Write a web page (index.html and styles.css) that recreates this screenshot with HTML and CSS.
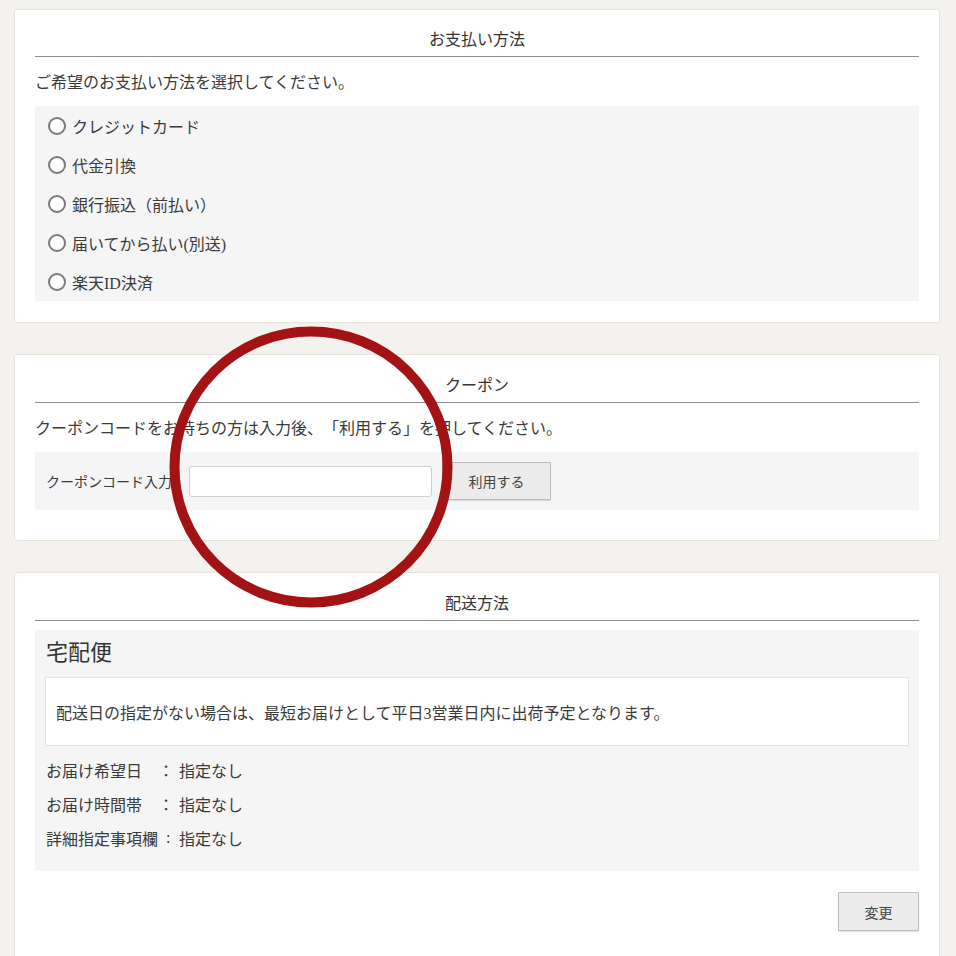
FILE: index.html
```html
<!doctype html>
<html lang="ja">
<head>
  <meta charset="utf-8">
  <title>お支払い方法</title>
  <link rel="stylesheet" href="styles.css">
</head>

<body class="page">
  <div class="cards">

    <section class="card card-payment">
      <h2 class="card-title">お支払い方法</h2>
      <p class="card-lead">ご希望のお支払い方法を選択してください。</p>
      <div class="box">
        <label class="radio-row"><input class="radio" type="radio" name="pay">クレジットカード</label>
        <label class="radio-row"><input class="radio" type="radio" name="pay">代金引換</label>
        <label class="radio-row"><input class="radio" type="radio" name="pay">銀行振込（前払い）</label>
        <label class="radio-row"><input class="radio" type="radio" name="pay">届いてから払い(別送)</label>
        <label class="radio-row"><input class="radio" type="radio" name="pay">楽天ID決済</label>
      </div>
    </section>

    <section class="card card-coupon">
      <h2 class="card-title">クーポン</h2>
      <p class="card-lead">クーポンコードをお持ちの方は入力後、「利用する」を押してください。</p>
      <div class="box coupon-box">
        <span class="coupon-label">クーポンコード入力</span>
        <input class="coupon-input" type="text" value="">
        <button class="btn btn-use" type="button">利用する</button>
      </div>
    </section>

    <section class="card card-delivery">
      <h2 class="card-title">配送方法</h2>
      <div class="box delivery-box">
        <h3 class="delivery-name">宅配便</h3>
        <div class="notice">配送日の指定がない場合は、最短お届けとして平日3営業日内に出荷予定となります。</div>
        <div class="delivery-row"><span class="delivery-key">お届け希望日</span><span class="delivery-sep">：</span>指定なし</div>
        <div class="delivery-row"><span class="delivery-key">お届け時間帯</span><span class="delivery-sep">：</span>指定なし</div>
        <div class="delivery-row"><span class="delivery-key wide">詳細指定事項欄</span><span class="delivery-sep tight">:</span>指定なし</div>
      </div>
      <div class="actions">
        <button class="btn btn-change" type="button">変更</button>
      </div>
    </section>

  </div>

  <!-- red marker drawn over the coupon field -->
  <svg class="marker" width="284" height="282" viewBox="0 0 284 282">
    <ellipse cx="142" cy="141" rx="136.5" ry="135.5" fill="none" stroke="#a31313" stroke-width="10"/>
  </svg>
</body>
</html>
```

FILE: styles.css
```css
.page {
  margin: 0;
  padding: 0;
  background: #f4f2ee;
  color: #3a3a3a;
  font-family: 'Liberation Serif', 'Noto Sans CJK JP', serif;
  font-size: 16px;
  text-spacing-trim: space-all;
  position: relative;
  height: 956px;
  overflow: hidden;
}

.cards {
  display: flex;
  flex-direction: column;
  gap: 31px;
  padding: 9px 16px 0 14px;
}

.card {
  background: #ffffff;
  border: 1px solid #e6e3dd;
  border-radius: 3px;
  padding: 0 20px 21px 20px;
}

.card-coupon {
  padding-bottom: 30px;
}

.card-delivery {
  padding-bottom: 60px;
}

.card-title {
  margin: 0;
  padding: 18px 0 4px 0;
  border-bottom: 1px solid #8f8f8f;
  text-align: center;
  font-size: 16px;
  font-weight: normal;
  line-height: 24px;
  color: #333333;
}

.card-coupon .card-title,
.card-delivery .card-title {
  padding-top: 19px;
}

.card-lead {
  margin: 0;
  padding: 14px 0 0 0;
  height: 35px;
  line-height: 24px;
  color: #3a3a3a;
}

.box {
  background: #f5f5f5;
}

.radio-row {
  display: flex;
  align-items: center;
  height: 39px;
  padding-left: 13px;
  color: #3a3a3a;
}

.radio {
  appearance: none;
  -webkit-appearance: none;
  width: 18px;
  height: 18px;
  margin: 0 6px 0 0;
  border: 2px solid #7a7a7a;
  border-radius: 50%;
  background: #ffffff;
  box-sizing: border-box;
}

.coupon-box {
  display: flex;
  align-items: center;
  height: 58px;
  padding-left: 11px;
}

.coupon-label {
  font-size: 14px;
  width: 143px;
  color: #3a3a3a;
}

.coupon-input {
  width: 243px;
  height: 31px;
  box-sizing: border-box;
  margin: 0;
  border: 1px solid #cfcfcf;
  border-radius: 3px;
  background: #ffffff;
}

.btn {
  font-family: 'Liberation Serif', 'Noto Sans CJK JP', serif;
  font-size: 14px;
  color: #444444;
  background: #ececec;
  border: 1px solid #bdbdbd;
  border-radius: 1px;
  box-shadow: 0 1px 1px rgba(0,0,0,0.12);
  box-sizing: border-box;
}

.btn-use {
  width: 109px;
  height: 38px;
  margin-left: 10px;
}

.delivery-box {
  margin-top: 9px;
  padding: 9px 10px 16px 10px;
}

.delivery-name {
  margin: 0 0 0 1px;
  font-size: 22px;
  font-weight: normal;
  line-height: 28px;
  height: 38px;
  color: #333333;
}

.notice {
  background: #ffffff;
  border: 1px solid #e3e3e3;
  height: 69px;
  box-sizing: border-box;
  display: flex;
  align-items: center;
  padding-left: 10px;
  margin-bottom: 7px;
}

.delivery-row {
  display: flex;
  align-items: center;
  height: 34px;
  padding-left: 1px;
}

.delivery-key {
  width: 112px;
}

.delivery-key.wide {
  width: 120px;
}

.delivery-sep {
  width: 21px;
}

.delivery-sep.tight {
  width: 13px;
}

.actions {
  display: flex;
  justify-content: flex-end;
  padding-top: 21px;
}

.btn-change {
  width: 81px;
  height: 39px;
}

.marker {
  position: absolute;
  left: 169px;
  top: 326px;
}
```
